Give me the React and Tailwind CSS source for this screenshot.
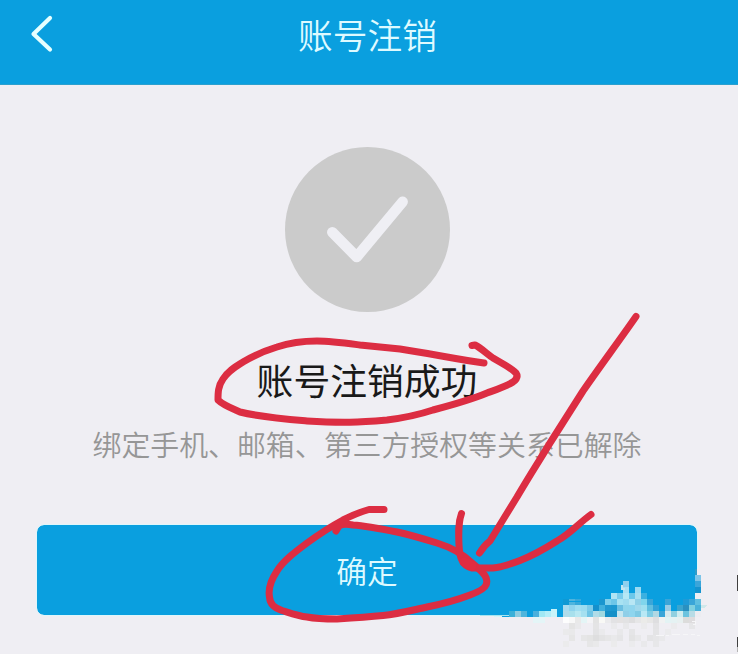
import React from 'react';

const CELL = 6;

// Pixelated patch over the lower right corner: [column, row, colour]
const mosaic = [
  [22, 0, '#7cc4e8'],
  [10, 1, '#8fd0ee'], [22, 1, '#3aa5da'],
  [10, 2, '#a9e0f4'], [12, 2, '#9bdaf2'], [22, 2, '#1493cf'],
  [8, 3, '#b0e4f4'], [9, 3, '#7ccdec'], [10, 3, '#b5e8f5'], [11, 3, '#6cc8ea'], [12, 3, '#a8dff0'], [13, 3, '#3cb0e0'], [22, 3, '#eceef3'],
  [0, 4, '#0f99d4'], [1, 4, '#4fb4dd'], [2, 4, '#35a8da'], [6, 4, '#1a96cf'], [7, 4, '#7fd0ec'], [8, 4, '#6cc6e8'], [9, 4, '#a8e2f2'], [10, 4, '#a0dcf0'], [11, 4, '#b8e6f4'], [12, 4, '#8fd0e8'], [13, 4, '#7fd5ec'], [14, 4, '#3aa5d8'], [17, 4, '#3aa5d8'], [20, 4, '#1f9ad6'], [21, 4, '#3aa5d8'], [22, 4, '#60bfe0'],
  [0, 5, '#a8dcf0'], [1, 5, '#8fd4ee'], [2, 5, '#9fdef2'], [3, 5, '#9adcf0'], [4, 5, '#7ccbe9'], [5, 5, '#1590cc'], [6, 5, '#40b0dd'], [7, 5, '#2098d0'], [8, 5, '#1a98d0'], [9, 5, '#6abfe2'], [10, 5, '#90d5ec'], [11, 5, '#8fd5ee'], [12, 5, '#a0d8ec'], [13, 5, '#a0e0f0'], [14, 5, '#5fbfe0'], [15, 5, '#2fa2d8'], [17, 5, '#9acce5'], [19, 5, '#3aa5cf'], [20, 5, '#2a90c0'], [21, 5, '#80d0e0'], [22, 5, '#4ab2da'],
  [0, 6, '#b0dcea'], [1, 6, '#a8e0ec'], [2, 6, '#b8e8f2'], [3, 6, '#a5e0f0'], [4, 6, '#70c5e5'], [5, 6, '#b0dce8'], [6, 6, '#a0d8e0'], [7, 6, '#1590c8'], [8, 6, '#1590c8'], [9, 6, '#c6e6f0'], [10, 6, '#90cfe8'], [11, 6, '#8fd5ee'], [12, 6, '#80cae4'], [13, 6, '#b8e8f5'], [14, 6, '#80cde5'], [15, 6, '#b0d8e4'], [16, 6, '#3aa5d8'], [17, 6, '#d8eaee'], [18, 6, '#90d0e0'], [19, 6, '#d0edf0'], [20, 6, '#6cc3de'], [21, 6, '#b8dce6'], [22, 6, '#ececf1'],
  [0, 7, '#fdfdfd'], [1, 7, '#f8f8f8'], [2, 7, '#e9e9e9'], [3, 7, '#e4f5f6'], [4, 7, '#f4f4f6'], [5, 7, '#e3e3e3'], [6, 7, '#f9f9f6'], [7, 7, '#ebebed'], [8, 7, '#e2e2e4'], [9, 7, '#e4e2e2'], [10, 7, '#e2e2e3'], [11, 7, '#dededf'], [12, 7, '#e6e6e7'], [13, 7, '#ebebe9'], [14, 7, '#e7e7e6'], [15, 7, '#dedee0'], [16, 7, '#f0f2f2'], [17, 7, '#e3f3f4'], [18, 7, '#e5f2f3'], [19, 7, '#e8f0f0'], [20, 7, '#dcdcdb'], [21, 7, '#dedcde'],
  [1, 8, '#e4e4e4'], [2, 8, '#e9e9eb'], [5, 8, '#e4e4e5'], [8, 8, '#eaeaec'], [10, 8, '#e8e8ea'], [13, 8, '#ebebed'], [15, 8, '#e3e3e5'], [18, 8, '#ebebed'], [21, 8, '#e6e6e8'],
  [0, 9, '#eaeaeb'], [1, 9, '#e9e9ea'], [5, 9, '#e3e3e5'], [6, 9, '#eaeaec'], [9, 9, '#e8e8ea'], [11, 9, '#e5e5e7'], [15, 9, '#e4e4e6'], [17, 9, '#ebebed'],
  [1, 10, '#e6e6e6'], [3, 10, '#e6e6e7'], [4, 10, '#e4e4e4'], [5, 10, '#dededf'], [6, 10, '#e3e3e4'], [7, 10, '#e6e6e7'], [8, 10, '#e9e9eb'], [9, 10, '#e5e5e7'], [11, 10, '#e3e3e4'], [12, 10, '#e8e8ea'], [14, 10, '#e4e4e6'], [15, 10, '#e6e6e8'], [16, 10, '#e9e9eb'],
  [0, 11, '#ebebec'], [4, 11, '#e6e6e7'], [5, 11, '#e9e9ea'], [8, 11, '#ebebec'], [11, 11, '#ebebed'], [13, 11, '#e9e9eb'], [15, 11, '#e7e7e9'],
];

const edgeCells = [
  [509, '#3bb0d8'],
  [515, '#8ecce0'],
  [521, '#4fb5dc'],
  [533, '#4ab0dc'],
  [539, '#a0e8f4'],
  [545, '#b4eef8'],
  [551, '#c8f4fa'],
];

const BackIcon = () => (
  <svg className="w-6 h-10" viewBox="0 0 24 40" fill="none" stroke="#e6ffff" strokeWidth="4.2" strokeLinecap="round" strokeLinejoin="round">
    <path d="M21 4L4.500 20L21 35.500" />
  </svg>
);

const SuccessIcon = () => (
  <svg className="mr-1 w-[165px] h-[165px]" viewBox="0 0 165 165" fill="none">
    <circle cx="82.5" cy="82.5" r="82.5" fill="#cbcbcb" />
    <path d="M47.3 85.3L71.7 110L117.6 54.8" stroke="#efeff4" strokeWidth="10.6" strokeLinecap="round" strokeLinejoin="round" />
  </svg>
);

const Mosaic = () => (
  <svg className="absolute inset-0 pointer-events-none" width="738" height="654" shapeRendering="crispEdges">
    <rect x="497" y="614" width="66" height="3" fill="#0a9fdf" />
    <rect x="563" y="611" width="132" height="6" fill="#0a9fdf" />
    <rect x="480" y="615" width="29" height="1" fill="#a8e4ef" />
    <rect x="494" y="616" width="8" height="1" fill="#d4f5f8" />
    <rect x="695" y="569" width="6" height="48" fill="#efeef3" />
    <rect x="695" y="569" width="2" height="6" fill="#2c9cc9" />
    {edgeCells.map(([x, color]) => (
      <rect key={x} x={x} y={x === 551 ? 609 : 611} width={CELL} height={x === 551 ? 8 : 6} fill={color} />
    ))}
    <rect x="533" y="617" width="12" height="6" fill="#e4f5f7" />
    {mosaic.map(([col, row, color]) => (
      <rect key={`${col}-${row}`} x={563 + col * CELL} y={575 + row * CELL} width={CELL} height={CELL} fill={color} />
    ))}
    <rect x="569" y="601" width="12" height="1" fill="#0a9fdf" />
    <path d="M621 585h2v3h2v2h-4z" fill="#c6e6f0" />
    <path d="M701 605h6l-2 3h-4z" fill="#cfe8ea" />
    <path d="M656 635h8m2 0h3m3-1h8m3 0h5m3 0h4m2 1h3M692 621h3v3h-2" stroke="#f6f6f8" strokeWidth="1" fill="none" />
    <rect x="737" y="575" width="1" height="16" fill="#3f3f3f" />
    <rect x="737" y="637" width="1" height="10" fill="#3f3f3f" />
    <rect x="737" y="647" width="1" height="5" fill="#b5b5b5" />
  </svg>
);

// Hand-drawn red marks
const Annotations = () => (
  <svg className="absolute inset-0 pointer-events-none" width="738" height="654" fill="none" stroke="#dc2d42" strokeWidth="7" strokeLinecap="round" strokeLinejoin="round">
    <path d="M484 363C455 359 428 353 400 349L360 345C345 343 331 341 317 341C302 341 289 343 277 347C264 351 253 356 243 362C235 367 228 371 223 379C218 386 218 393 218 400C223 405 231 408 240 412C260 417 284 419 307 421C322 422 336 422.500 350 422.300C363 422 375 421 387 420C403 418 418 415 433 410C452 405 470 400 487 393C498 389 507 386 513 382C517 379 518 376 516 373C510 367 501 363 493 358C486 353 481 348 475 345L472 345.500" />
    <path d="M384 509.500L369 509.500C360 512 351 516 343 520C330 527 318 535 307 543C295 552 283 561 277 571C271 580 268 589 269.500 597C270 605 275 608 282 610.500C290 613 298 616 307 617C317 619 327 619 337 619C353 618 368 617 383 615.500C398 614 413 610 427 607C442 604 457 600 470 595C478 592 485 588 486 585C489 578 484 573 472 563C463 554 450 547 437 543C424 539 411 535 397 532C382 529 367 526 353 525C347 524 342 524 339 526L336 531" />
    <path d="M636 316.500C619 341 601 365 583 391L550 443C539 461 528 478 517 497L490 541C486 544 482 549 479.500 553" />
    <path d="M461.500 513.500C458 523 458.500 534 459 545C459.500 555 461 566 472 568L493 568C503 567 511 564 520 560.500C534 555 546 548 557 541C570 534 579 523 591 514.500" />
    <path d="M464 562L472 566" strokeWidth="9" stroke="#e22c40" />
  </svg>
);

const App = () => {
  return (
    <div className="relative w-[738px] h-[654px] overflow-hidden bg-[#efeef3] font-['Noto_Sans_CJK_SC',sans-serif]">
      {/* Header */}
      <header className="h-[85px] bg-[#0a9fdf] border-b border-[#2ba0ce] grid grid-cols-[80px_1fr_80px] items-start">
        <button className="pl-[29px] pt-[14px]" aria-label="返回">
          <BackIcon />
        </button>
        <h1 className="text-center pt-2 pr-[3px] text-[34.700px] leading-[52px] font-[350] text-[#defaff]">账号注销</h1>
      </header>

      {/* Result */}
      <main className="flex flex-col items-center pt-[62px]">
        <SuccessIcon />
        <h2 className="mt-[39px] mr-1 text-[36.800px] leading-[56px] font-normal text-[#191919]">账号注销成功</h2>
        <p className="mt-[14px] mr-1 text-[28.900px] leading-[44px] font-[350] whitespace-nowrap text-[#969696]">
          绑定手机、邮箱、第三方授权等关系已解除
        </p>
        <button className="mt-[60px] mr-1 w-[660px] h-[90px] rounded-[7px] bg-[#0a9fdf] outline outline-1 outline-[#dff6fa] text-[30.700px] font-[350] text-[#defaff]">
          确定
        </button>
      </main>

      <Mosaic />
      <Annotations />
    </div>
  );
};

export default App;
